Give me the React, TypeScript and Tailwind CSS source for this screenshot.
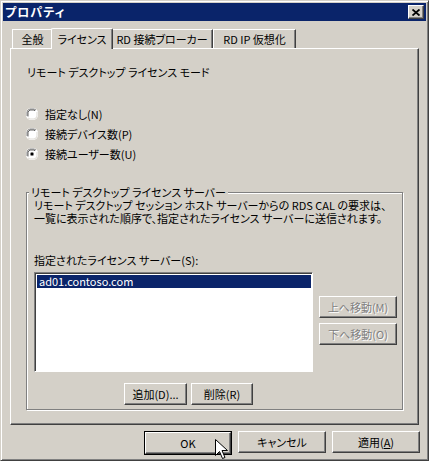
import React from 'react';

const font = "font-['Noto_Sans_CJK_JP','Noto_Sans_CJK_SC',sans-serif] [font-feature-settings:'palt']";

// classic raised 3D edge
const raised =
  'border border-t-white border-l-white border-r-[#404040] border-b-[#404040] shadow-[inset_-1px_-1px_#808080]';

function Radio({ checked, label }: { checked?: boolean; label: string }) {
  return (
    <div className="flex h-[20px] items-center">
      <svg width="12" height="12" viewBox="0 0 12 12" className="ml-[15px] mr-[7px]">
        <path d="M4 0h4l2 1 1 1 1 2v4l-1 2-1 1-2 1H4L2 11 1 10 0 8V4l1-2 1-1z" fill="#fff" />
        <path d="M1 8V4l1-2 2-1h4l2 1" fill="none" stroke="#808080" />
        <path d="M2 8.5V4l1-1 1-1h4l1 1" fill="none" stroke="#404040" strokeWidth="0.8" />
        <path d="M11 4v4l-1 2-2 1H4l-2-1" fill="none" stroke="#d4d0c8" strokeWidth="0.8" />
        {checked && <rect x="4.5" y="4.5" width="3" height="3" rx="0.5" fill="#000" />}
      </svg>
      <span>{label}</span>
    </div>
  );
}

function Btn({
  children,
  className = '',
  disabled,
}: {
  children: React.ReactNode;
  className?: string;
  disabled?: boolean;
}) {
  return (
    <div
      className={`flex h-[22px] items-center justify-center whitespace-nowrap bg-[#d4d0c8] ${raised} ${
        disabled ? 'text-[#808080] [text-shadow:1px_1px_#fff]' : 'text-black'
      } ${className}`}
    >
      {children}
    </div>
  );
}

function Tab({ label, active, className = '' }: { label: string; active?: boolean; className?: string }) {
  return (
    <div
      className={`flex items-center justify-center whitespace-nowrap border-l border-t border-r border-l-white border-t-white border-r-[#404040] bg-[#d4d0c8] shadow-[inset_-1px_0_#808080] ${
        active ? 'relative z-10 -mx-[2px] -mb-px h-[21px] rounded-t-[2px]' : 'h-[19px]'
      } ${className}`}
    >
      {label}
    </div>
  );
}

export default function App() {
  return (
    <div className={`relative h-[461px] w-[429px] bg-[#d4d0c8] text-[11px] leading-[14px] text-black ${font}`}>
      <div className="h-full w-full border border-t-[#d4d0c8] border-l-[#d4d0c8] border-r-[#404040] border-b-[#404040] shadow-[inset_1px_1px_#fff,inset_-1px_-1px_#808080] p-[2px]">
        {/* title bar */}
        <div className="flex h-[18px] items-center justify-between bg-[#0a246a] pl-[2px] pr-[2px]">
          <span className="text-[12px] font-bold tracking-[1px] text-white">プロパティ</span>
          <div className={`flex h-[14px] w-[16px] items-center justify-center bg-[#d4d0c8] ${raised}`}>
            <svg width="8" height="7" viewBox="0 0 8 7">
              <path d="M0.5 0.5l7 6M7.5 0.5l-7 6" stroke="#000" strokeWidth="1.8" />
            </svg>
          </div>
        </div>

        {/* tabs */}
        <div className="ml-[9px] mt-[7px] flex items-end">
          <Tab label="全般" className="w-[41px]" />
          <Tab label="ライセンス" active className="w-[62px]" />
          <Tab label="RD 接続ブローカー" className="w-[102px]" />
          <Tab label="RD IP 仮想化" className="w-[83px]" />
        </div>

        {/* tab panel */}
        <div className="ml-[7px] flex h-[377px] w-[409px] flex-col border border-t-white border-l-white border-r-[#404040] border-b-[#404040] shadow-[inset_-1px_-1px_#808080]">
          <div className="ml-[16px] mt-[16px]">リモート デスクトップ ライセンス モード</div>
          <div className="mt-[25px] flex flex-col">
            <Radio label="指定なし(N)" />
            <Radio label="接続デバイス数(P)" />
            <Radio checked label="接続ユーザー数(U)" />
          </div>

          {/* group box */}
          <div className="relative ml-[15px] mt-[28px] h-[218px] w-[377px] border border-[#808080] shadow-[1px_1px_#fff,inset_1px_1px_#fff]">
            <div className="absolute -top-[7px] left-[2px] whitespace-nowrap bg-[#d4d0c8] px-[2px] leading-[12px]">
              リモート デスクトップ ライセンス サーバー
            </div>
            <div className="ml-[7px] mt-[6px] whitespace-nowrap leading-[13px]">
              リモート デスクトップ セッション ホスト サーバーからの RDS CAL の要求は、
              <br />
              一覧に表示された順序で、指定されたライセンス サーバーに送信されます。
            </div>
            <div className="ml-[7px] mt-[28px]">指定されたライセンス サーバー(S):</div>
            <div className="ml-[7px] mt-[5px] flex gap-[6px]">
              <div className="h-[100px] w-[279px] border border-t-[#808080] border-l-[#808080] border-r-white border-b-white bg-white p-px shadow-[inset_1px_1px_#404040]">
                <div className="ml-px mt-px h-[13px] bg-[#0a246a] pl-[2px] leading-[13px] text-white">
                  ad01.contoso.com
                </div>
              </div>
              <div className="mt-[24px] flex flex-col gap-[5px]">
                <Btn disabled className="w-[78px]">
                  上へ移動(M)
                </Btn>
                <Btn disabled className="w-[78px]">
                  下へ移動(O)
                </Btn>
              </div>
            </div>
            <div className="ml-[97px] mt-[11px] flex gap-[4px]">
              <Btn className="w-[63px]">追加(D)...</Btn>
              <Btn className="w-[62px]">削除(R)</Btn>
            </div>
          </div>
        </div>

        {/* dialog buttons */}
        <div className="mr-[6px] mt-[6px] flex justify-end gap-[6px]">
          <div className="border border-black">
            <Btn className="h-[20px] w-[86px]">OK</Btn>
          </div>
          <Btn className="w-[88px]">キャンセル</Btn>
          <Btn className="w-[88px]">
            適用(<span className="underline">A</span>)
          </Btn>
        </div>
      </div>

      {/* mouse pointer */}
      <svg width="13" height="22" viewBox="0 0 13 22" className="absolute left-[215px] top-[439px]">
        <path d="M0.5 0.5v16l4-4 3 7 2.5-1-3-7h5.5z" fill="#fff" stroke="#000" strokeWidth="1" />
      </svg>
    </div>
  );
}
